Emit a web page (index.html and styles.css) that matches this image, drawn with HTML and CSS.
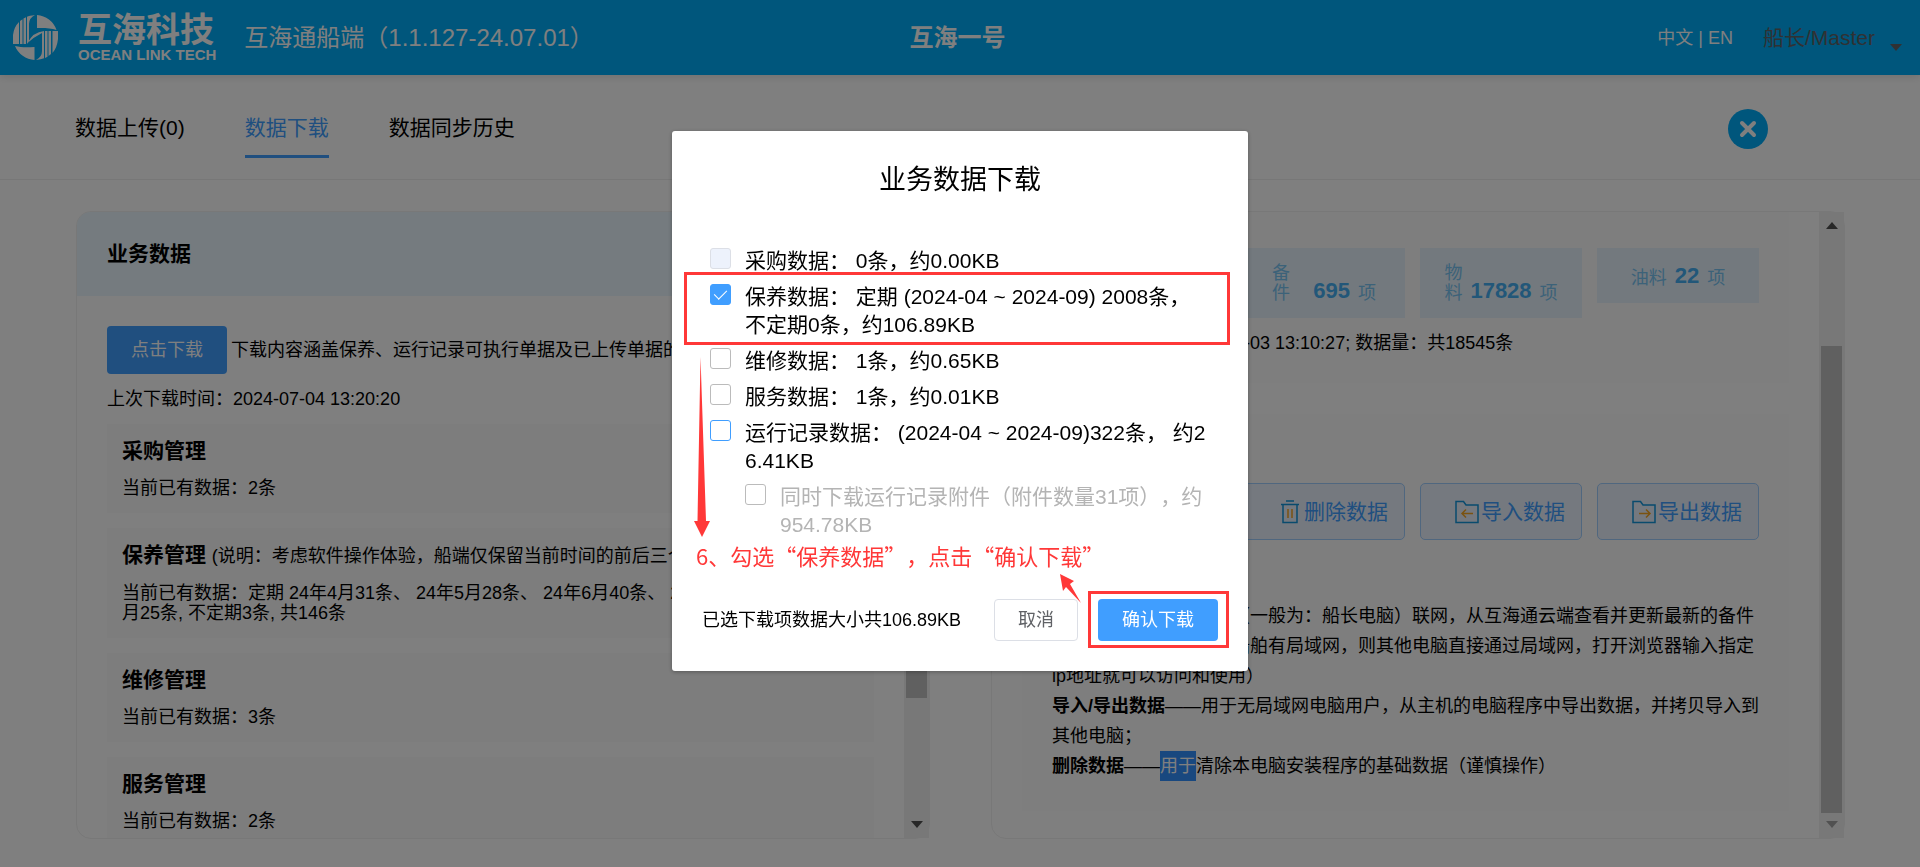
FILE: index.html
```html
<!DOCTYPE html>
<html lang="zh-CN">
<head>
<meta charset="utf-8">
<title>互海通船端</title>
<link rel="stylesheet" href="styles.css">
</head>
<body>
<div class="page">
  <header class="topbar">
    <div class="brand">
      <svg class="brand-mark" viewBox="0 0 45 45" aria-hidden="true">
        <g fill="#fff">
          <path d="M24 0A22.500 22.500 0 0 1 43.500 15C38 13 31 12.800 24 13Z"/>
          <path d="M2 31C8 32.500 14 32.300 21.500 32V45A22.500 22.500 0 0 1 2 31Z"/>
          <path d="M0 29V20Q1 12 6 7V29ZM7 29V6L9.500 4.200V29ZM10.500 29V3.500L13 2.200V29ZM14 29V1.800Q16 .8 22 0Q16 3 16 9V26Z"/>
          <path d="M45 16V24Q44 33 39.500 38V16ZM38 16V39L35.500 41V16ZM34.500 16V41.700L32 43V16ZM31 16V43.300Q28 44.500 23 45Q29 42 29 36V18Q21 22 14.500 28Q20 17 31 16Z"/>
        </g>
      </svg>
      <div class="brand-text">
        <strong class="brand-cn">互海科技</strong>
        <span class="brand-en">OCEAN LINK TECH</span>
      </div>
      <span class="app-version">互海通船端（1.1.127-24.07.01）</span>
    </div>
    <strong class="ship-name">互海一号</strong>
    <div class="account">
      <span class="lang"><a href="#">中文</a> | <a href="#">EN</a></span>
      <button class="user" type="button">船长/Master
        <svg class="user-caret" viewBox="0 0 12 8" aria-hidden="true"><path d="M0 0H12L6 7Z" fill="currentColor"/></svg>
      </button>
    </div>
  </header>

  <div class="tabbar">
    <nav class="tabs">
      <a class="tab" href="#">数据上传(0)</a>
      <a class="tab tab-active" href="#">数据下载</a>
      <a class="tab" href="#">数据同步历史</a>
    </nav>
    <button class="close" type="button" aria-label="关闭">
      <svg viewBox="0 0 40 40" aria-hidden="true"><path d="M14 14L26 26M26 14L14 26" stroke="#fff" stroke-width="4" stroke-linecap="round"/></svg>
    </button>
  </div>

  <main class="panels">
    <section class="panel">
      <div class="panel-view">
        <h2 class="panel-head">业务数据</h2>
        <div class="panel-body">
          <div class="download-row">
            <button class="btn-download" type="button">点击下载</button>
            <span>下载内容涵盖保养、运行记录可执行单据及已上传单据的</span>
          </div>
          <p class="last-time">上次下载时间：2024-07-04 13:20:20</p>
          <div class="cards">
            <article class="card"><h3>采购管理</h3><p>当前已有数据：2条</p></article>
            <article class="card"><h3>保养管理 <small>(说明：考虑软件操作体验，船端仅保留当前时间的前后三个月)</small></h3>
              <p>当前已有数据：定期 24年4月31条、 24年5月28条、 24年6月40条、 24年7<br>月25条, 不定期3条, 共146条</p></article>
            <article class="card"><h3>维修管理</h3><p>当前已有数据：3条</p></article>
            <article class="card"><h3>服务管理</h3><p>当前已有数据：2条</p></article>
          </div>
        </div>
      </div>
      <div class="scrollbar">
        <svg class="arrow" viewBox="0 0 12 7" aria-hidden="true"><path d="M0 7L6 0L12 7Z"/></svg>
        <div class="track"><div class="thumb thumb-upper"></div></div>
        <svg class="arrow" viewBox="0 0 12 7" aria-hidden="true"><path d="M0 0L6 7L12 0Z"/></svg>
      </div>
    </section>

    <section class="panel">
      <div class="panel-view base-view">
        <div class="block block-stats">
          <div class="grid4">
            <div class="tile tile-wrap tile-first"><span class="tile-label">备件</span><b>695</b><span>项</span></div>
            <div class="tile tile-wrap"><span class="tile-label">物料</span><b>17828</b><span>项</span></div>
            <div class="tile"><span>油料</span><b>22</b><span>项</span></div>
          </div>
          <p class="stats-note">上次更新时间：2024-07-03 13:10:27; 数据量：共18545条</p>
        </div>
        <div class="block">
          <h3 class="block-title">基础数据</h3>
          <div class="grid4">
            <button class="action tile-first" type="button">
              <svg class="icon" viewBox="0 0 24 24" fill="none" aria-hidden="true"><path d="M3 4.500H21M8 1H16M5 5V22.500H19V5" stroke="#1296db" stroke-width="1.500"/><path d="M10 9V18M14 9V18" stroke="#f5a623" stroke-width="1.500"/></svg>删除数据</button>
            <button class="action" type="button">
              <svg class="icon" viewBox="0 0 24 24" fill="none" aria-hidden="true"><path d="M1 1.500H8.500L11 5H23V22.500H1Z" stroke="#1296db" stroke-width="1.500"/><path d="M18 13.500H7M11 9.500L7 13.500L11 17.500" stroke="#f5a623" stroke-width="1.500"/></svg>导入数据</button>
            <button class="action" type="button">
              <svg class="icon" viewBox="0 0 24 24" fill="none" aria-hidden="true"><path d="M1 1.500H8.500L11 5H23V22.500H1Z" stroke="#1296db" stroke-width="1.500"/><path d="M7 13.500H18M14 9.500L18 13.500L14 17.500" stroke="#f5a623" stroke-width="1.500"/></svg>导出数据</button>
          </div>
          <div class="help">
            <p>说明：</p>
            <p><b>更新数据</b>——船端主机（一般为：船长电脑）联网，从互海通云端查看并更新最新的备件<br>和物料基础数据（如果船舶有局域网，则其他电脑直接通过局域网，打开浏览器输入指定<br>ip地址就可以访问和使用）</p>
            <p><b>导入/导出数据</b>——用于无局域网电脑用户，从主机的电脑程序中导出数据，并拷贝导入到<br>其他电脑；</p>
            <p><b>删除数据</b>——<mark>用于</mark>清除本电脑安装程序的基础数据（谨慎操作）</p>
          </div>
        </div>
      </div>
      <div class="scrollbar">
        <svg class="arrow" viewBox="0 0 12 7" aria-hidden="true"><path d="M0 7L6 0L12 7Z"/></svg>
        <div class="track"><div class="thumb thumb-lower"></div></div>
        <svg class="arrow arrow-off" viewBox="0 0 12 7" aria-hidden="true"><path d="M0 0L6 7L12 0Z"/></svg>
      </div>
    </section>
  </main>
</div>

<div class="overlay">
  <div class="dialog" role="dialog" aria-labelledby="dialog-title">
    <h2 class="dialog-title" id="dialog-title">业务数据下载</h2>
    <div class="options">
      <label class="option"><input class="check" type="checkbox" disabled><span>采购数据： 0条，约0.00KB</span></label>
      <label class="option"><input class="check" type="checkbox" checked><span>保养数据： 定期 (2024-04 ~ 2024-09) 2008条，<br>不定期0条，约106.89KB</span></label>
      <label class="option"><input class="check" type="checkbox"><span>维修数据： 1条，约0.65KB</span></label>
      <label class="option"><input class="check" type="checkbox"><span>服务数据： 1条，约0.01KB</span></label>
      <label class="option"><input class="check check-focus" type="checkbox"><span>运行记录数据： (2024-04 ~ 2024-09)322条， 约2<br>6.41KB</span></label>
      <label class="option option-sub"><input class="check" type="checkbox"><span>同时下载运行记录附件（附件数量31项），约<br>954.78KB</span></label>
    </div>
    <footer class="dialog-foot">
      <span class="total">已选下载项数据大小共106.89KB</span>
      <button class="btn btn-plain" type="button">取消</button>
      <button class="btn btn-primary" type="button">确认下载</button>
    </footer>

    <div class="mark mark-option"></div>
    <div class="mark mark-confirm"></div>
    <p class="mark-note">6、勾选“保养数据”，点击“确认下载”</p>
    <svg class="mark-arrows" viewBox="0 0 576 540" aria-hidden="true">
      <g fill="#ff3838"><path d="M28.500 226L34 390H38L30 406L22 390H25.500Z"/><path d="M388 443L402 450L398 453L409 472L394 456L391 460Z"/></g>
    </svg>
  </div>
</div>
</body>
</html>
```
FILE: styles.css
```css
* { box-sizing: border-box; }
body {
  margin: 0;
  font: 18px/20px "Liberation Sans", "Noto Sans CJK SC", sans-serif;
  color: #000;
  background: #fff;
  text-spacing-trim: space-all;
}
h2, h3, p { margin: 0; }
a { color: inherit; text-decoration: none; }
button { font: inherit; color: inherit; border: 0; background: none; padding: 0; margin: 0; }
svg { display: block; flex: none; }

.page { height: 100vh; display: flex; flex-direction: column; overflow: hidden; }

/* top bar */
.topbar {
  flex: none;
  height: 75px;
  display: grid;
  grid-template-columns: 1fr auto 1fr;
  align-items: center;
  padding: 0 18px 0 13px;
  background: #00acf8;
  color: #fff;
  box-shadow: 0 2px 8px rgba(0, 0, 0, .12);
}
.brand { display: flex; align-items: center; white-space: nowrap; }
.brand-mark { width: 45px; height: 45px; }
.brand-text { display: flex; flex-direction: column; margin: 0 28px 0 20px; }
.brand-cn { font-size: 34px; line-height: 34px; font-weight: 700; }
.brand-en { font-size: 15px; line-height: 16px; font-weight: 700; }
.app-version { font-size: 24px; line-height: 32px; }
.ship-name { font-size: 24px; line-height: 32px; }
.account { display: flex; justify-content: flex-end; align-items: center; gap: 30px; }
.user { display: flex; align-items: center; gap: 15px; font-size: 21px; line-height: 28px; color: #606266; }
.user-caret { width: 12px; height: 8px; margin-top: 20px; }

/* tabs */
.tabbar {
  flex: none;
  height: 105px;
  display: flex;
  align-items: center;
  justify-content: space-between;
  padding: 3px 152px 0 75px;
  border-bottom: 1px solid #eee;
}
.tabs { display: flex; gap: 60px; font-size: 21px; line-height: 30px; }
.tab { padding: 14px 0 12px; border-bottom: 3px solid transparent; }
.tab-active { color: #409eff; border-color: #409eff; }
.close { width: 40px; height: 40px; border-radius: 50%; background: #00acf8; }

/* panels */
.panels {
  flex: 1;
  min-height: 0;
  display: grid;
  grid-template-columns: 1fr 1fr;
  gap: 61px;
  padding: 31px 75px 28px 76px;
}
.panel { display: flex; min-width: 0; min-height: 0; border: 1px solid #f0f0f0; border-radius: 15px; }
.panel-view { flex: 1; min-width: 0; overflow: hidden; border-radius: 14px 0 0 14px; }
.panel-head { padding: 28px 30px; font-size: 21px; line-height: 28px; background: #eaf7ff; }
.panel-body { padding: 30px; }
.download-row { display: flex; align-items: center; gap: 4px; white-space: nowrap; }
.btn-download { width: 120px; height: 48px; border-radius: 4px; background: #409eff; color: #fff; }
.last-time { padding: 15px 0; }
.cards { display: flex; flex-direction: column; gap: 15px; }
.card { padding: 15px; background: #fbfbfb; }
.card h3 { font-size: 21px; line-height: 24px; margin-bottom: 15px; white-space: nowrap; overflow: hidden; }
.card small { font-size: 18px; font-weight: 400; }

.scrollbar {
  flex: none;
  width: 25px;
  display: flex;
  flex-direction: column;
  align-items: center;
  padding: 10px 0;
  background: #f1f1f1;
}
.arrow { width: 12px; height: 7px; fill: #505050; }
.arrow-off { fill: #a3a3a3; }
.track { flex: 1; width: 21px; padding: 8px 0; display: flex; flex-direction: column; }
.thumb { background: #c1c1c1; }
.thumb-upper { height: 80%; }
.thumb-lower { height: 81%; margin-top: auto; }

/* base data */
.base-view { display: flex; flex-direction: column; gap: 31px; padding: 0 30px 29px; }
.block { flex: none; padding: 30px; background: #fcfcfc; }
.block-stats { flex: 1; padding-top: 36px; }
.block-title { font-size: 21px; line-height: 24px; margin-bottom: 15px; }
.grid4 { display: grid; grid-template-columns: repeat(4, 1fr); gap: 15px; padding-left: 14px; align-items: start; }
.tile-first { grid-column-start: 2; }
.tile {
  display: flex;
  justify-content: center;
  align-items: flex-end;
  gap: 8px;
  padding: 15px 30px;
  background: #e6f3fc;
  color: #79c4f2;
}
.tile b { font-size: 22px; line-height: 25px; color: #45aef2; }
.tile-wrap { padding: 15px 22px; }
.tile-wrap b { min-width: 52px; text-align: right; }
.tile-label { width: 18px; }
.stats-note { margin-top: 15px; }
.action {
  height: 57px;
  display: flex;
  align-items: center;
  justify-content: flex-end;
  gap: 2px;
  padding-right: 16px;
  border: 1px solid #a0cfff;
  border-radius: 5px;
  background: #ebf2ff;
  color: #409eff;
  font-size: 21px;
}
.icon { width: 24px; height: 24px; }
.help { margin-top: 31px; line-height: 30px; white-space: nowrap; }
.help mark { display: inline-block; background: #3390ff; color: #fff; }

/* dialog */
.overlay {
  position: fixed;
  inset: 0;
  background: rgba(0, 0, 0, .5);
}
.dialog {
  position: relative;
  width: 30%;
  min-width: 576px;
  margin: calc(15vh + 1px) auto 0;
  padding: 31px 30px 30px;
  border-radius: 3px;
  background: #fff;
  box-shadow: 0 1px 4px rgba(0, 0, 0, .3);
}
.dialog-title { font-size: 27px; line-height: 36px; font-weight: 400; text-align: center; }
.options { display: flex; flex-direction: column; gap: 8px; padding: 49px 0 60px 8px; font-size: 21px; line-height: 28px; }
.option { display: flex; align-items: flex-start; gap: 14px; white-space: nowrap; }
.option-sub { margin-left: 35px; color: #b4b4b4; }
.check {
  appearance: none;
  flex: none;
  width: 21px;
  height: 21px;
  margin: 1px 0 0;
  border: 1px solid #bbb;
  border-radius: 3px;
  background: #fff;
}
.check:disabled { background: #edf2fc; border-color: #dcdfe6; }
.check:checked { background: #409eff; border-color: #409eff; }
.check:checked::after {
  content: "";
  display: block;
  width: 6px;
  height: 11px;
  margin: 2px 0 0 6px;
  border: solid #fff;
  border-width: 0 1px 1px 0;
  transform: rotate(45deg);
}
.check-focus { border-color: #409eff; }
.dialog-foot { display: flex; align-items: center; gap: 20px; }
.total { margin-right: auto; }
.btn { height: 42px; border-radius: 4px; }
.btn-plain { width: 84px; border: 1px solid #dcdfe6; color: #606266; }
.btn-primary { width: 120px; background: #409eff; color: #fff; }

/* guide marks drawn over the dialog */
.mark { position: absolute; border: 3px solid #ff3838; pointer-events: none; }
.mark-option { left: 12px; top: 141px; width: 546px; height: 73px; }
.mark-confirm { left: 416px; top: 460px; width: 141px; height: 57px; }
.mark-note {
  position: absolute;
  left: 24px;
  top: 408px;
  font: 22px/32px "Noto Sans CJK SC", sans-serif;
  color: #ff3838;
  white-space: nowrap;
}
.mark-arrows { position: absolute; left: 0; top: 0; width: 576px; height: 540px; pointer-events: none; }
```
